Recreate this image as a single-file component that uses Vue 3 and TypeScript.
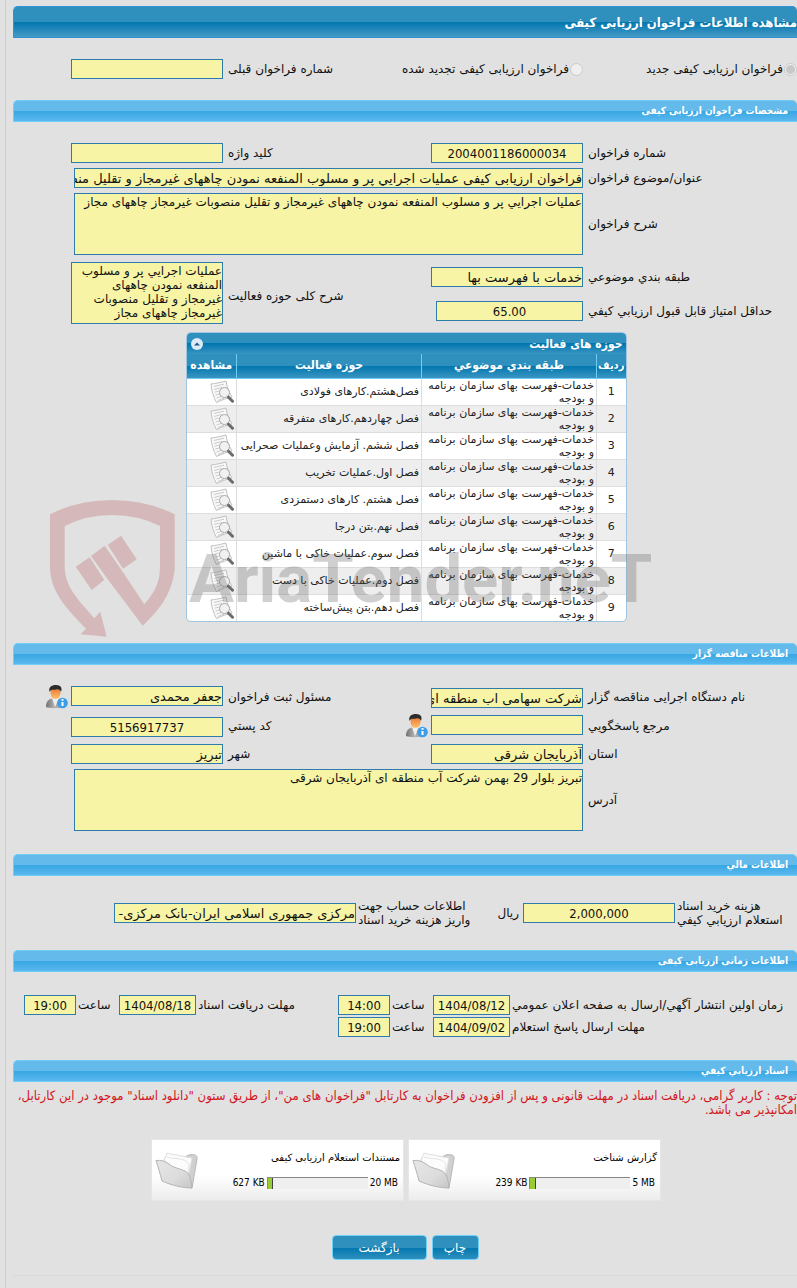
<script setup lang="ts">
import { ref } from 'vue'

interface Activity {
  id: number
  category: string
  field: string
}

interface Attachment {
  title: string
  used: string
  total: string
  percent: number
}

const category = 'خدمات-فهرست بهای سازمان برنامه و بودجه'

const activities: Activity[] = [
  'فصل‌هشتم.کارهای فولادی',
  'فصل چهاردهم.کارهای متفرقه',
  'فصل ششم. آزمایش وعملیات صحرایی',
  'فصل اول.عملیات تخریب',
  'فصل هشتم. کارهای دستمزدی',
  'فصل نهم.بتن درجا',
  'فصل سوم.عملیات خاکی با ماشین',
  'فصل دوم.عملیات خاکی با دست',
  'فصل دهم.بتن پیش‌ساخته',
].map((field, i) => ({ id: i + 1, category, field }))

const attachments: Attachment[] = [
  { title: 'گزارش شناخت', used: '239 KB', total: '5 MB', percent: 6 },
  { title: 'مستندات استعلام ارزیابی کیفی', used: '627 KB', total: '20 MB', percent: 5 },
]

const callType = ref('new')
const open = ref(true)
</script>

<template>
  <main class="page" dir="rtl">
    <h1 class="title">مشاهده اطلاعات فراخوان ارزیابی کیفی</h1>

    <div class="form top">
      <label class="radio"><input v-model="callType" type="radio" name="callType" value="new" disabled />فراخوان ارزیابی کیفی جدید</label>
      <label class="radio"><input v-model="callType" type="radio" name="callType" value="renewed" disabled />فراخوان ارزیابی کیفی تجدید شده</label>
      <label class="lbl" for="prev">شماره فراخوان قبلی</label>
      <input id="prev" class="box" readonly />
    </div>

    <h2 class="section">مشخصات فراخوان ارزیابی کیفی</h2>
    <div class="form specs">
      <label class="lbl" for="num">شماره فراخوان</label>
      <input id="num" class="box num" value="2004001186000034" readonly />
      <label class="lbl" for="key">کلید واژه</label>
      <input id="key" class="box" readonly />

      <label class="lbl first" for="subject">عنوان/موضوع فراخوان</label>
      <input id="subject" class="box wide" value="فراخوان ارزیابی کیفی عملیات اجرايي پر و مسلوب المنفعه نمودن چاههای غیرمجاز و تقلیل منصوبات غیرمجاز چاههای مجاز" readonly />

      <label class="lbl first" for="desc">شرح فراخوان</label>
      <textarea id="desc" class="box area wide" readonly>عملیات اجرايي پر و مسلوب المنفعه نمودن چاههای غیرمجاز و تقلیل منصوبات غیرمجاز چاههای مجاز</textarea>
    </div>
    <div class="form scope">
      <label class="lbl" for="class">طبقه بندي موضوعي</label>
      <input id="class" class="box" value="خدمات با فهرست بها" readonly />
      <label class="lbl tall" for="scope">شرح کلی حوزه فعالیت</label>
      <textarea id="scope" class="box area tall" readonly>عملیات اجرايي پر و مسلوب المنفعه نمودن چاههای غیرمجاز و تقلیل منصوبات غیرمجاز چاههای مجاز</textarea>
      <label class="lbl first" for="score">حداقل امتیاز قابل قبول ارزیابي کیفي</label>
      <input id="score" class="box num score" value="65.00" readonly />
    </div>

    <div class="activities">
      <section class="panel">
        <header class="panel-head">
          <span>حوزه های فعالیت</span>
          <button type="button" class="toggle" aria-label="بستن" @click="open = !open">
            <svg viewBox="0 0 12 12" width="12" height="12"><circle cx="6" cy="6" r="6" fill="#dcebf8" /><path d="M3 7.5 6 4.5 9 7.5Z" fill="#24567a" /></svg>
          </button>
        </header>
        <table v-if="open">
          <colgroup><col class="c1" /><col class="c2" /><col /><col class="c4" /></colgroup>
          <thead>
            <tr><th class="idx-head">ردیف</th><th>طبقه بندي موضوعي</th><th>حوزه فعالیت</th><th>مشاهده</th></tr>
          </thead>
          <tbody>
            <tr v-for="a in activities" :key="a.id">
              <td class="idx">{{ a.id }}</td>
              <td>{{ a.category }}</td>
              <td>{{ a.field }}</td>
              <td class="view">
                <button type="button" class="icon" aria-label="مشاهده">
                  <svg viewBox="0 0 24 24" width="24" height="24">
                    <path d="M1 4C6 3.500 10 2.500 16 1c1 6 2.500 10 6 16-5 1-10 3-15.500 5.500C3.500 17 1.500 11 1 4Z" fill="#f8f8f8" stroke="#c0c0c0" />
                    <path d="M4 6.500 14 4.200M4 9.500l8-2M4.700 12.200l4-1M5.500 15l4-1M6.500 18l4.500-1.500M8 20.500l6-2.500" fill="none" stroke="#cacaca" />
                    <circle cx="14.500" cy="12.500" r="5" fill="#f0f0f0" fill-opacity=".9" stroke="#a8a8a8" />
                    <path d="m18.500 17.200 4 4" stroke="#6c6c6c" stroke-width="3" stroke-linecap="round" />
                  </svg>
                </button>
              </td>
            </tr>
          </tbody>
        </table>
      </section>
      <div class="watermark" dir="ltr" aria-hidden="true">
        <svg viewBox="0 0 125 137" width="125" height="137">
          <path d="M0 14.300Q28 0 62 0T124.700 14.300V68.300C123 91 111 109 92.700 125.700L57.700 79.300 41 56 54.700 45.700 71 69.300 94.300 104.300C103 94 110 84 110 67.300V26Q88 15 62 15T14.700 26V68.300C16 88 27 98 44.300 118.300L50.300 111.700 56.700 136.700 30.700 134.300 36 128.700C15 107 1 92 0 68.300Z" />
          <path d="M25.700 66.700 39.700 57.300 54.300 80 41.700 90ZM57.700 44.700 71 35.700 86.700 59.300 73 68.700Z" />
        </svg>
        <span>AriaTender.neT</span>
      </div>
    </div>

    <h2 class="section">اطلاعات مناقصه گزار</h2>
    <div class="form owner">
      <label class="lbl" for="org">نام دستگاه اجرایی مناقصه گزار</label>
      <input id="org" class="box end" value="شرکت سهامی اب منطقه ای آذربایجان شرقی" readonly />
      <label class="lbl" for="reg">مسئول ثبت فراخوان</label>
      <input id="reg" class="box start" value="جعفر محمدی" readonly />
      <button type="button" class="icon person" aria-label="اطلاعات مسئول">
        <svg viewBox="0 0 22 24" width="22" height="24">
          <defs>
            <linearGradient id="coat" x1="0" y1="0" x2="1" y2="0"><stop offset="0" stop-color="#707070" /><stop offset="0.500" stop-color="#b5b5b5" /><stop offset="1" stop-color="#8a8a8a" /></linearGradient>
            <linearGradient id="face" x1="0" y1="0" x2="0" y2="1"><stop offset="0" stop-color="#e8702a" /><stop offset="1" stop-color="#ffc070" /></linearGradient>
          </defs>
          <path d="M0 22c0-5 2-7.500 6-8.500h6c4 1 5.500 4 5.500 8.500-4 1.500-14 1.500-17.500 0Z" fill="url(#coat)" /><path d="m6 13 3 9 4-9Z" fill="#eee" /><ellipse cx="9.500" cy="8" rx="5" ry="6" fill="url(#face)" /><path d="M3.500 7C2 1 7 0 10 0c5 0 6.500 3 5 7-1-2-2-3-5-2.500C7 5 5 4 3.500 7Z" fill="#2c2c2c" /><circle cx="16.500" cy="18" r="5.300" fill="#3b9de8" /><path d="M16.500 14v1.800M16.500 17v4" stroke="#fff" stroke-width="2" />
        </svg>
      </button>

      <label class="lbl" for="ref">مرجع پاسخگويي</label>
      <input id="ref" class="box start" readonly />
      <div class="pair">
        <button type="button" class="icon person" aria-label="اطلاعات مرجع">
          <svg viewBox="0 0 22 24" width="22" height="24"><path d="M0 22c0-5 2-7.500 6-8.500h6c4 1 5.500 4 5.500 8.500-4 1.500-14 1.500-17.500 0Z" fill="url(#coat)" /><path d="m6 13 3 9 4-9Z" fill="#eee" /><ellipse cx="9.500" cy="8" rx="5" ry="6" fill="url(#face)" /><path d="M3.500 7C2 1 7 0 10 0c5 0 6.500 3 5 7-1-2-2-3-5-2.500C7 5 5 4 3.500 7Z" fill="#2c2c2c" /><circle cx="16.500" cy="18" r="5.300" fill="#3b9de8" /><path d="M16.500 14v1.800M16.500 17v4" stroke="#fff" stroke-width="2" /></svg>
        </button>
        <label class="lbl" for="zip">کد پستي</label>
      </div>
      <input id="zip" class="box num end" value="5156917737" readonly />

      <label class="lbl first" for="prov">استان</label>
      <input id="prov" class="box" value="آذربایجان شرقی" readonly />
      <label class="lbl" for="city">شهر</label>
      <input id="city" class="box" value="تبریز" readonly />
    </div>
    <div class="form address">
      <label class="lbl" for="addr">آدرس</label>
      <textarea id="addr" class="box area wide" readonly>تبریز بلوار 29 بهمن شرکت آب منطقه ای آذربایجان شرقی</textarea>
    </div>

    <h2 class="section">اطلاعات مالي</h2>
    <div class="money">
      <label class="lbl" for="cost">هزینه خرید اسناد<br />استعلام ارزیابي کیفي</label>
      <input id="cost" class="box num" value="2,000,000" readonly />
      <div class="pair">
        <span class="unit">ریال</span>
        <label class="lbl" for="acct">اطلاعات حساب جهت<br />واریز هزینه خرید اسناد</label>
      </div>
      <input id="acct" class="box" value="مرکزی جمهوری اسلامی ایران-بانک مرکزی-" readonly />
    </div>

    <h2 class="section">اطلاعات زمانی ارزیابی کیفی</h2>
    <div class="times">
      <label class="lbl" for="d1">زمان اولین انتشار آگهي/ارسال به صفحه اعلان عمومي</label>
      <input id="d1" class="box num" value="1404/08/12" dir="ltr" readonly />
      <label class="lbl" for="t1">ساعت</label>
      <input id="t1" class="box num" value="14:00" dir="ltr" readonly />
      <label class="lbl" for="d2">مهلت دریافت اسناد</label>
      <input id="d2" class="box num" value="1404/08/18" dir="ltr" readonly />
      <label class="lbl" for="t2">ساعت</label>
      <input id="t2" class="box num" value="19:00" dir="ltr" readonly />

      <label class="lbl first" for="d3">مهلت ارسال پاسخ استعلام</label>
      <input id="d3" class="box num" value="1404/09/02" dir="ltr" readonly />
      <label class="lbl" for="t3">ساعت</label>
      <input id="t3" class="box num" value="19:00" dir="ltr" readonly />
    </div>

    <h2 class="section">اسناد ارزیابي کیفي</h2>
    <p class="notice">توجه : کاربر گرامی، دریافت اسناد در مهلت قانونی و پس از افزودن فراخوان به کارتابل "فراخوان های من"، از طریق ستون "دانلود اسناد" موجود در این کارتابل، امکانپذیر می باشد.</p>

    <div class="cards">
      <article v-for="f in attachments" :key="f.title" class="card">
        <div class="info">
          <div class="name">{{ f.title }}</div>
          <div class="usage">
            <span dir="ltr">{{ f.total }}</span>
            <div class="track"><div class="fill" :style="{ width: f.percent + '%' }"></div></div>
            <span dir="ltr">{{ f.used }}</span>
          </div>
        </div>
        <svg class="folder" viewBox="0 0 43 39" width="43" height="39">
          <defs>
            <linearGradient id="fold" x1="0" y1="0" x2="1" y2="1"><stop offset="0" stop-color="#e6e6e6" /><stop offset="0.600" stop-color="#dcdcdc" /><stop offset="1" stop-color="#c6c6c6" /></linearGradient>
          </defs>
          <path d="M28 8C33 3 37 3 40 4c2 1 2.500 2 2 4l-5 29-4-2Z" fill="#d0d0d0" stroke="#b8b8b8" />
          <path d="M9 10 12 2c4 2 9 1 14 3 4 1 7 1 11 2l-4 20-22 2Z" fill="#fcfcfc" stroke="#dedede" />
          <path d="m11 5-3 5M12 6c6 2 12 1 17 3 3 1 4 3 5 5l-1 9" fill="none" stroke="#e4e4e4" />
          <path d="M1 9.500C6 9 10 10 14 13c4 4 10 4 16 7 4 2 6 6 7 17-10 0-21-3-30-7C5 22 3 16 1 9.500Z" fill="url(#fold)" stroke="#b4b4b4" />
        </svg>
      </article>
    </div>

    <div class="actions">
      <button type="button" class="btn">چاپ</button>
      <button type="button" class="btn back">بازگشت</button>
    </div>
  </main>
</template>

<style>
body {
  background: #e1e1e1;
  overflow-x: hidden;
}
</style>

<style scoped>
* {
  box-sizing: border-box;
}
.page {
  margin-left: 5px;
  border-left: 1px solid #cdcdcd;
  padding: 6px 0 0 7px;
  min-height: 100vh;
  font: 12px/14px "DejaVu Sans", sans-serif;
  color: #111;
}
.title {
  margin: 0;
  height: 32px;
  font: bold 13px/31px "DejaVu Sans Condensed", "DejaVu Sans", sans-serif;
  color: #fff;
  border: 1px solid #2f93d6;
  border-right: 0;
  border-radius: 5px 5px 0 0;
  background: linear-gradient(#2f90be 50%, #0076ae 50%, #4599c5);
}
.section {
  margin: 0;
  height: 22px;
  padding-right: 9px;
  font: bold 10px/20px "DejaVu Sans Condensed", "DejaVu Sans", sans-serif;
  color: #fff;
  border: 1px solid #6fcdf6;
  border-right: 0;
  border-radius: 5px 5px 0 0;
  background: linear-gradient(#64baea 50%, #37a6e2 50%, #5ab8ee);
}
.form {
  display: grid;
  grid-template-columns: 209px 152px 1fr 152px 53px;
  gap: 5px;
  align-items: center;
}
.top {
  padding: 21px 0;
}
.specs {
  padding-top: 21px;
}
.scope {
  padding-top: 7px;
  grid-template-rows: 30px 38px;
  row-gap: 0;
}
.owner {
  padding-top: 21px;
  grid-template-rows: 22px 22px 20px;
  row-gap: 7px;
}
.address {
  padding: 5px 0 23px;
}
.radio {
  display: flex;
  align-items: center;
  gap: 1px;
  white-space: nowrap;
}
.radio input {
  appearance: none;
  flex: none;
  width: 13px;
  height: 13px;
  margin: 0;
  border: 1px solid #cacaca;
  border-radius: 50%;
  background: #efefef;
}
.radio input:checked {
  background: radial-gradient(circle, #c8c8c8 4px, #efefef 5px);
}
.lbl {
  text-align: left;
  white-space: nowrap;
}
.first {
  grid-column: 1;
}
.box {
  width: 100%;
  height: 20px;
  margin: 0;
  padding: 0;
  border: 1px solid #2e7cab;
  border-radius: 0;
  background: #f7f4a5;
  font: 13px "DejaVu Sans", sans-serif;
  color: #111;
  outline: 0;
}
.num {
  text-align: center;
  font-family: "DejaVu Sans Condensed", "DejaVu Sans", sans-serif;
}
.wide {
  grid-column: 2 / 5;
  width: calc(100% - 3px);
  justify-self: start;
}
.area {
  display: block;
  height: 62px;
  resize: none;
  overflow: hidden;
  font-size: 12px;
  line-height: 14px;
  padding-top: 1px;
}
.tall {
  grid-row: 1 / 3;
}
.lbl.tall {
  grid-column: 3;
}
.area.tall {
  grid-column: 4;
  align-self: start;
}
.score {
  width: 147px;
}
.start {
  align-self: start;
}
.end {
  align-self: end;
}
.icon {
  display: block;
  padding: 0;
  border: 0;
  background: none;
  cursor: pointer;
}
.icon svg {
  display: block;
}
.person {
  width: 22px;
  height: 24px;
  margin-right: -2px;
}
.pair {
  display: flex;
  align-items: center;
  justify-content: space-between;
}
.activities {
  position: relative;
  padding: 2px 0 21px 2px;
}
.panel {
  width: 441px;
  margin: 0 auto;
  border: 1px solid #9fc6e0;
  border-radius: 5px;
  overflow: hidden;
  background: #fff;
}
.panel-head {
  display: flex;
  align-items: center;
  justify-content: space-between;
  height: 21px;
  padding: 0 3px 0 4px;
  font: bold 12px/14px "DejaVu Sans Condensed", "DejaVu Sans", sans-serif;
  color: #fff;
  background: linear-gradient(#2f90be 50%, #0076ae 50%, #3a94c2);
}
.toggle {
  padding: 0;
  border: 0;
  background: none;
  height: 12px;
  line-height: 0;
}
table {
  width: 100%;
  table-layout: fixed;
  border-collapse: collapse;
}
.c1 {
  width: 29px;
}
.c2 {
  width: 175px;
}
.c4 {
  width: 50px;
}
th {
  height: 24px;
  padding: 0 0 2px;
  font: bold 12px/14px "DejaVu Sans Condensed", "DejaVu Sans", sans-serif;
  color: #fff;
  border-left: 1px solid #6fcdf6;
  border-bottom: 1px solid #6fcdf6;
  background: linear-gradient(#2f90be 50%, #0076ae 50%, #3a94c2);
}
.idx-head {
  padding: 0;
  font-size: 11px;
}
th:last-child,
td:last-child {
  border-left: 0;
}
td {
  height: 27px;
  padding: 0 2px;
  font-size: 11px;
  line-height: 13px;
  color: #222;
  border-left: 1px solid #ddd;
  border-bottom: 1px solid #ddd;
}
tbody tr:nth-child(even) {
  background: #eee;
}
tbody tr:last-child td {
  border-bottom: 0;
}
.idx {
  text-align: center;
}
.watermark span {
  position: absolute;
  left: 176px;
  bottom: 24px;
  font: bold 67px/80px Roboto, "Liberation Sans", sans-serif;
  color: rgba(100, 100, 100, 0.3);
  pointer-events: none;
}
.watermark svg {
  position: absolute;
  left: 37px;
  bottom: 6px;
  fill: rgba(191, 111, 116, 0.35);
  pointer-events: none;
}
.money {
  display: grid;
  grid-template-columns: 120px 152px 1fr 242px 99px;
  column-gap: 2px;
  align-items: center;
  padding: 23px 0;
}
.unit {
  padding-right: 2px;
}
.times {
  display: grid;
  grid-template-columns: 285px 77px 39px 52px 1fr 77px 39px 52px 9px;
  gap: 2px;
  align-items: center;
  padding: 23px 0;
}
.notice {
  margin: 0;
  padding: 7px 0 22px;
  font: 13px/14px "DejaVu Sans Condensed", "DejaVu Sans", sans-serif;
  color: #d4151b;
}
.cards {
  display: flex;
  justify-content: center;
  gap: 4px;
  padding-left: 2px;
}
.card {
  display: flex;
  width: 253px;
  height: 62px;
  padding: 11px 3px 0;
  border: 1px solid #e6e6e6;
  background: linear-gradient(#fff 60%, #ececec);
  color: #000;
  font-size: 10px;
}
.info {
  flex: 1;
}
.usage {
  display: flex;
  align-items: center;
  gap: 2px;
  margin-top: 11px;
  padding-right: 2px;
  font-family: "DejaVu Sans Condensed", "DejaVu Sans", sans-serif;
}
.track {
  width: 101px;
  height: 12px;
  border-top: 1px solid #888;
  border-left: 1px solid #888;
  background: #efefef;
  direction: ltr;
}
.fill {
  height: 100%;
  background: #9c3;
  border-right: 1px solid #444;
}
.actions {
  display: flex;
  justify-content: center;
  gap: 5px;
  padding: 34px 0 15px;
  border-bottom: 1px solid #dadada;
}
.btn {
  width: 47px;
  height: 25px;
  padding: 0;
  border: 1px solid #6fd0f8;
  border-radius: 4px;
  background: linear-gradient(#2f90be 50%, #0076ae 50%, #2f90be);
  color: #fff;
  font: 12px "DejaVu Sans", sans-serif;
}
.back {
  width: 95px;
}
</style>
